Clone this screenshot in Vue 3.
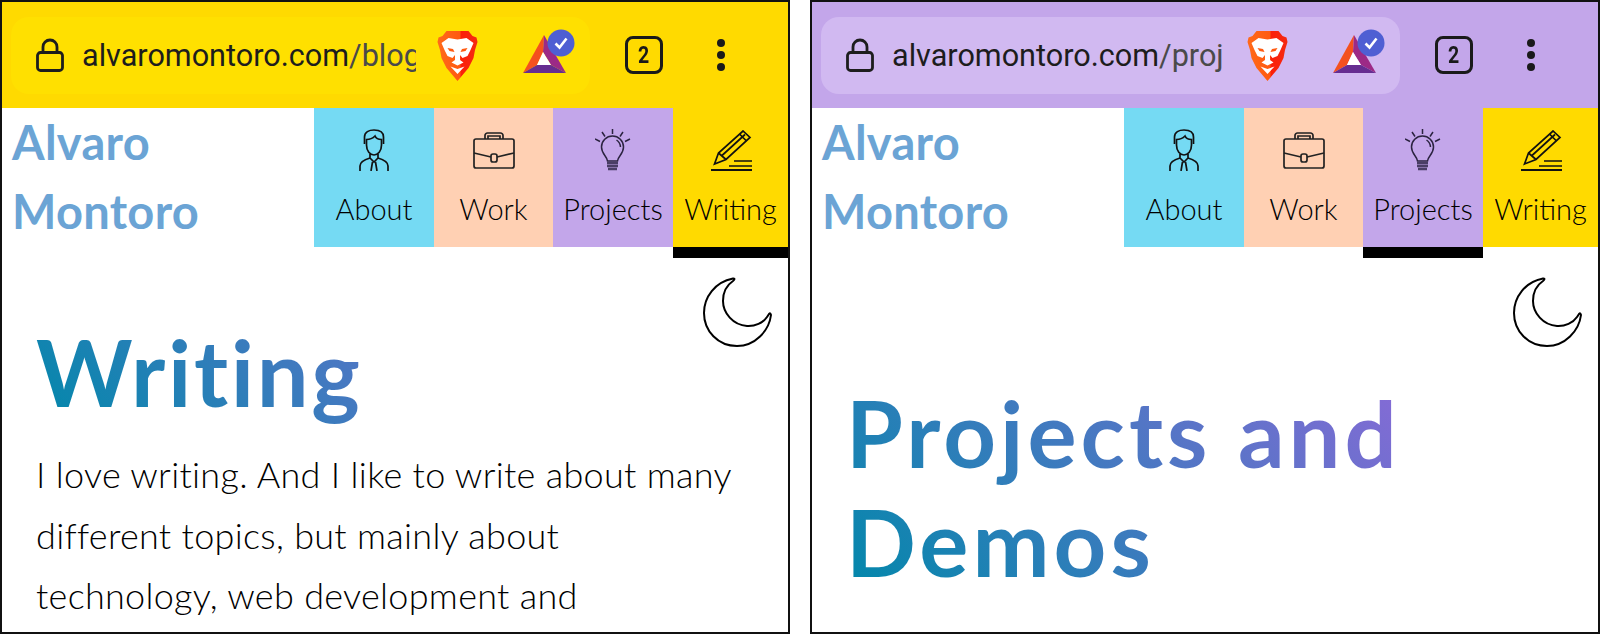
<script setup>
const phones = [
  { id: 'writing', bar: 'yellow', path: '/blog', active: 'Writing' },
  { id: 'projects', bar: 'purple', path: '/proj', active: 'Projects' }
]
const navItems = [
  { name: 'About', color: 'cyan', icon: 'person' },
  { name: 'Work', color: 'peach', icon: 'case' },
  { name: 'Projects', color: 'lilac', icon: 'bulb' },
  { name: 'Writing', color: 'gold', icon: 'pencil' }
]
</script>

<template>
  <div class="page">
    <section v-for="p in phones" :key="p.id" class="phone">
      <div class="toolbar" :class="p.bar">
        <div class="urlbar">
          <svg class="lock" viewBox="0 0 28 34" fill="none" stroke="#1d1d1d" stroke-width="2.8">
            <path d="M7 15V9a7 7 0 0 1 14 0v6" />
            <rect x="1.500" y="14.500" width="25" height="18" rx="3" />
          </svg>
          <div class="url">alvaromontoro.com<span class="path">{{ p.path }}</span></div>
          <svg class="brave" viewBox="0 0 40 50">
            <defs>
              <linearGradient :id="'brave-' + p.id" x1="0" x2="1" y1="0" y2="0">
                <stop offset="0" stop-color="#ff6a1a" />
                <stop offset="0.55" stop-color="#ff5a10" />
                <stop offset="0.6" stop-color="#fb1f0a" />
                <stop offset="1" stop-color="#f52a10" />
              </linearGradient>
            </defs>
            <path :fill="'url(#brave-' + p.id + ')'" d="M9 0H31L35 5 39 6.500 40 11 37.500 19 36 27 31 37 20 50 9 37 4 27 2.500 19 0 11 1 6.500 5 5Z" />
            <path fill="#fff" d="M4 12 11 7 20 8.500 29 7 36 12 33 19 30 25 25 27 22.500 24 22.500 29 26 31.500 20 34.500 14 31.500 17.500 29 17.500 24 15 27 10 25 7 19Z" />
            <path fill="#fff" d="M13 35.500 20 38 27 35.500 20 43Z" />
            <path fill="#ff5a10" d="M10 17 15.500 18 17 21 12 20ZM30 17 24.500 18 23 21 28 20Z" />
          </svg>
          <svg class="bat" viewBox="0 0 52 40">
            <polygon fill="#f4511e" points="21,1 0,39 14,31 20,18" />
            <polygon fill="#9c2a86" points="21,1 43,39 28,31 20,18" />
            <polygon fill="#662d91" points="0,39 43,39 28,31 14,31" />
            <polygon fill="#fff" points="20,18 14,31 28,31" />
            <circle cx="38" cy="9" r="13.500" fill="#4f5fd3" />
            <path d="M32.500 9.500 36.500 13.500 43.500 4.500" fill="none" stroke="#fff" stroke-width="2.600" />
          </svg>
        </div>
        <div class="tabs"><span>2</span></div>
        <div class="dots"><i></i><i></i><i></i></div>
      </div>

      <header class="site-header">
        <a class="logo">Alvaro<br />Montoro</a>
        <nav class="nav">
          <a
            v-for="n in navItems"
            :key="n.name"
            class="nav-item"
            :class="[n.color, { active: n.name === p.active }]"
          >
            <span class="icon-box">
              <svg v-if="n.icon === 'person'" width="30" height="42" viewBox="0 0 30 42" fill="none" stroke="#111" stroke-width="1.700">
                <path d="M5.500 15V8C5.500 3 10 1 15 1S24.500 3 24.500 8V15" />
                <path d="M7.500 10.500C11 10.500 14 9 16 7C17 9.500 20 10.500 22.500 10.500V16C22.500 22 19 26 15 26S7.500 22 7.500 16Z" />
                <path d="M11 25V29L15 33 19 29V25" />
                <path d="M1 42V37C1 33 4 31 11 29M29 42V37C29 33 26 31 19 29" />
                <path d="M13.500 33 12 42M16.500 33 18 42" />
              </svg>
              <svg v-else-if="n.icon === 'case'" width="42" height="37" viewBox="0 0 42 37" fill="none" stroke="#222" stroke-width="1.700">
                <path d="M12 7V3.500A2.500 2.500 0 0 1 14.500 1H27.500A2.500 2.500 0 0 1 30 3.500V7M15 7V4H27V7" />
                <rect x="1" y="7" width="40" height="29" rx="2" />
                <path d="M1 21 18 25M24 25 41 21" />
                <rect x="18" y="22" width="6" height="8" rx="2" />
              </svg>
              <svg v-else-if="n.icon === 'bulb'" width="36" height="42" viewBox="0 0 36 42" fill="none" stroke="#2b2340" stroke-width="1.500">
                <path d="M17.500 0V5M7 3 10 7.500M28 3 25 7.500M0 10 5 12.500M35 10 30 12.500" />
                <path d="M12.500 32C12 27 6.500 25 6.500 18A11 11 0 0 1 28.500 18C28.500 25 23 27 22.500 32Z" />
                <path d="M21.500 11A9 9 0 0 1 25.500 18" />
                <path d="M12 34H23M12 37H23M13 40H22" stroke="#4a3d66" stroke-width="2.400" />
              </svg>
              <svg v-else class="pencil" width="42" height="41" viewBox="0 0 42 41" fill="none" stroke="#111" stroke-width="1.700">
                <path d="M3.500 34 7.500 23 32 1 39 7.500 15 29.500Z" />
                <path d="M7.500 23 15 29.500M11 25.500 34 4.500M28.500 4 35.500 11" />
                <path d="M23 31H41M18 36H41" />
                <path d="M0 40H41" stroke-width="2" />
              </svg>
            </span>
            <span class="label">{{ n.name }}</span>
          </a>
        </nav>
      </header>

      <main class="content" :class="p.id">
        <svg class="moon" viewBox="0 0 69 70" fill="#fff" stroke="#000" stroke-width="2">
          <path d="M30 1.500C12 5 1 20 1 36 1 54 15 69 34 69 52 69 66 54 68 38 67 34.500 66 37 64 40 60 46 52 49.500 44 49 30 48 20 36 20 24 20 14 24 8 30 4 32 2.500 32 1.200 30 1.500Z" />
        </svg>
        <template v-if="p.id === 'writing'">
          <h1 class="title">Writing</h1>
          <p class="intro">I love writing. And I like to write about many<br />different topics, but mainly about<br />technology, web development and</p>
        </template>
        <h1 v-else class="title">Projects and<br />Demos</h1>
      </main>
    </section>
  </div>
</template>

<style>
html, body { margin: 0; background: #fff; }
</style>

<style scoped>
.page {
  display: flex;
  gap: 20px;
  width: 1600px;
  height: 634px;
  overflow: hidden;
  background: #fff;
  font-family: Lato, "Open Sans", sans-serif;
}
.phone {
  position: relative;
  box-sizing: border-box;
  width: 790px;
  height: 634px;
  flex: none;
  border: 2px solid #111;
  overflow: hidden;
}

.toolbar {
  height: 106px;
  display: flex;
  align-items: center;
  padding: 0 0 0 9px;
}
.toolbar.yellow { background: #ffda00; }
.toolbar.purple { background: #c3a6ea; }
.urlbar {
  width: 579px;
  height: 77px;
  margin-top: 1px;
  box-sizing: border-box;
  padding-left: 25px;
  display: flex;
  align-items: center;
  border-radius: 18px;
  flex: none;
}
.yellow .urlbar { background: #ffe000; }
.purple .urlbar { background: #d1b9f1; }
.lock { width: 28px; height: 34px; flex: none; margin-top: -1px; }
.url {
  width: 334px;
  margin-left: 18px;
  flex: none;
  overflow: hidden;
  white-space: nowrap;
  font-family: Roboto, sans-serif;
  font-size: 30.600px;
  color: #1d1d1d;
}
.path { color: #4a4a4a; }
.brave { width: 41px; height: 50px; margin-left: 21px; flex: none; }
.bat { width: 52px; height: 40px; margin-left: 45px; flex: none; margin-top: -3px; overflow: visible; }
.tabs {
  box-sizing: border-box;
  width: 38px;
  height: 38px;
  margin-left: 35px;
  border: 3px solid #1a1a1a;
  border-radius: 8px;
  display: flex;
  align-items: center;
  justify-content: center;
  font-family: Roboto, sans-serif;
  font-weight: 700;
  font-size: 23px;
  color: #1a1a1a;
  flex: none;
}
.tabs span { display: block; transform: scaleX(0.85); }
.dots {
  margin-left: 54px;
  display: flex;
  flex-direction: column;
  gap: 4px;
}
.dots i {
  display: block;
  width: 8px;
  height: 8px;
  border-radius: 50%;
  background: #1a1a1a;
}

.site-header {
  display: flex;
  justify-content: space-between;
  height: 150px;
}
.logo {
  padding: 0 0 0 10px;
  font-size: 47px;
  font-weight: 700;
  line-height: 69px;
  letter-spacing: 0.3px;
  color: #6ba4d5;
}
.nav {
  display: grid;
  grid-template-columns: 120px 119px 120px 115px;
  align-items: start;
}
.nav-item {
  box-sizing: content-box;
  height: 139px;
  display: flex;
  flex-direction: column;
  align-items: center;
  color: #000;
}
.nav-item.active { border-bottom: 11px solid #000; }
.cyan { background: #75daf3; }
.peach { background: #ffd0b3; }
.lilac { background: #c3a6ea; }
.gold { background: #ffda00; }
.icon-box {
  height: 42px;
  margin-top: 21px;
  display: flex;
  align-items: center;
}
.pencil { margin-left: 3px; }
.label {
  margin-top: 18px;
  font-size: 29px;
  font-weight: 300;
  line-height: 40px;
}

.content { position: relative; padding: 59px 34px 0; }
.content.projects { padding-top: 120px; }
.moon {
  position: absolute;
  top: 19px;
  right: 16px;
  width: 69px;
  height: 70px;
}
.title {
  margin: 0;
  font-size: 92px;
  font-weight: 700;
  line-height: 109px;
  letter-spacing: 2.600px;
  background: linear-gradient(45deg, #0088aa, #a464e0);
  -webkit-background-clip: text;
  background-clip: text;
  color: transparent;
}
.projects .title { letter-spacing: 4px; }
.intro {
  margin: 18px 0 0;
  font-size: 36px;
  font-weight: 300;
  line-height: 60.500px;
  letter-spacing: 0.300px;
  color: #000;
  white-space: nowrap;
}
</style>
